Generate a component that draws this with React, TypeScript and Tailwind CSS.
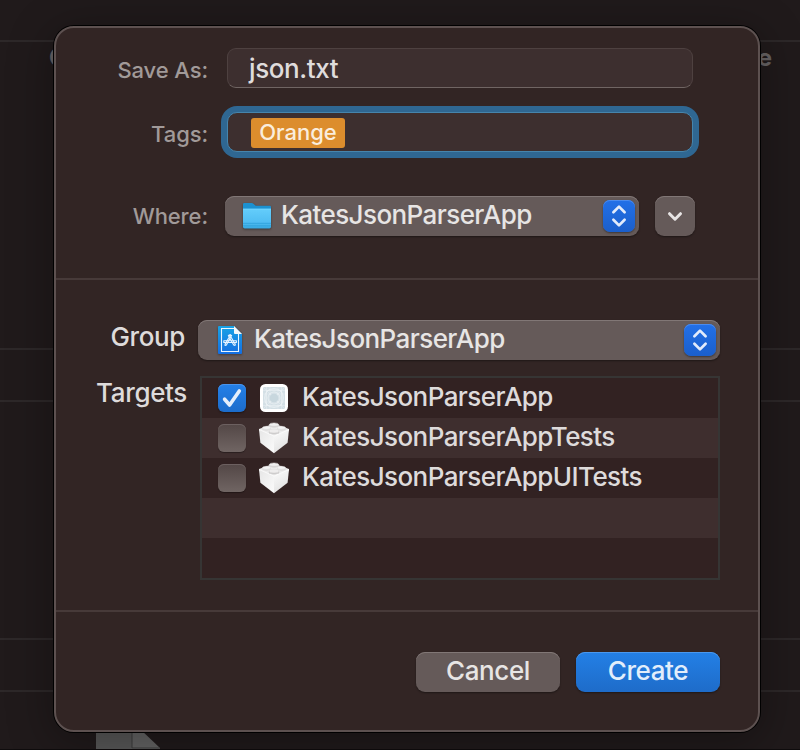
import React from "react";

function Stepper() {
  return (
    <span className="flex h-8 w-8 items-center justify-center rounded-[7px] bg-linear-to-b from-[#2270e8] to-[#1b5fcb] shadow-[inset_0_1px_0_#4b8bee,0_1px_2px_#00000066]">
      <svg width="16" height="24" viewBox="0 0 16 24" fill="none" stroke="#e2ebfb" strokeWidth="2.7" strokeLinecap="round" strokeLinejoin="round">
        <path d="M2.4 8.2 8 2.6l5.6 5.6M2.4 15.8 8 21.4l5.6-5.6" />
      </svg>
    </span>
  );
}

function FolderIcon() {
  return (
    <svg width="30" height="28" viewBox="0 0 30 28" className="block drop-shadow-[0_1px_1px_#00000066]">
      <defs>
        <linearGradient id="folderFront" x1="0" y1="0" x2="0" y2="1">
          <stop offset="0" stopColor="#64cdfb" />
          <stop offset="0.7" stopColor="#50bdf2" />
          <stop offset="1" stopColor="#37a9e2" />
        </linearGradient>
      </defs>
      <path d="M1 2.2Q1 1 2.2 1h7.4q1 0 1.8.7l1.7 1.6q.6.5 1.5.5h13.2Q29 3.800 29 5v8H1z" fill="#1c91d0" />
      <path d="M1 6.800h28v18q0 1.700-1.700 1.700H2.700Q1 26.500 1 24.800z" fill="url(#folderFront)" />
      <path d="M1 7.200h28" stroke="#75d7ff" strokeWidth="0.8" />
      <path d="M1 21.300h28M1 23.800h28" stroke="#2d9fd9" strokeWidth="0.8" />
    </svg>
  );
}

function ProjectIcon() {
  return (
    <svg width="24" height="28" viewBox="0 0 24 28" className="block drop-shadow-[0_1px_1px_#00000055]">
      <defs>
        <linearGradient id="projectPage" x1="0" y1="0" x2="0" y2="1">
          <stop offset="0" stopColor="#18a3e5" />
          <stop offset="1" stopColor="#146ee2" />
        </linearGradient>
      </defs>
      <path d="M1 0h15l8 8v19q0 1-1 1H1q-1 0-1-1V1q0-1 1-1z" fill="url(#projectPage)" />
      <path d="M16 2.500H3.500v23h17V8" fill="none" stroke="#e9f5ff" strokeWidth="1.1" />
      <path d="M16 0v7q0 1 1 1h7z" fill="#f4f7fa" />
      <g fill="none" stroke="#e6f3ff" strokeWidth="1.1" strokeLinecap="round" strokeLinejoin="round">
        <path d="m10.300 9.600 1.300-.8 5.700 9.400-.3 1.300-1.300-.5zM13.600 9.600l-1.200-.9-1 1.400M13.600 9.600 8.400 18.900l-1.300.6v-1.400l3.700-6.300" />
        <path d="M5.800 14.800h12.600v1.700H5.800z" />
      </g>
    </svg>
  );
}

function AppIcon() {
  return (
    <svg width="28" height="28" viewBox="0 0 28 28" className="block">
      <rect width="28" height="28" rx="5.500" fill="#fff" />
      <rect x="3" y="3" width="22" height="22" rx="1" fill="#d3dfe5" />
      <g fill="none" stroke="#eef4f6" strokeWidth="0.7">
        <path d="M3 6.500h22M3 10h22M3 18h22M3 21.500h22M6.500 3v22M10 3v22M18 3v22M21.500 3v22M3 3l22 22M25 3 3 25" strokeOpacity="0.6" />
        <circle cx="14" cy="14" r="9.500" />
        <circle cx="14" cy="14" r="6" />
        <rect x="6" y="6" width="16" height="16" rx="3" />
      </g>
      <circle cx="14" cy="14" r="4.300" fill="#c8d7de" />
    </svg>
  );
}

function BrickIcon() {
  return (
    <svg width="32" height="32" viewBox="0 0 32 32" className="block">
      <defs>
        <linearGradient id="brickLeft" x1="0" y1="0" x2="1" y2="1">
          <stop offset="0" stopColor="#e6e6e6" />
          <stop offset="1" stopColor="#fbfbfb" />
        </linearGradient>
        <linearGradient id="brickRight" x1="0" y1="0" x2="0.4" y2="1">
          <stop offset="0" stopColor="#fdfdfd" />
          <stop offset="1" stopColor="#e2e2e2" />
        </linearGradient>
      </defs>
      <path d="M1 7 16 1.500 31 7v2L16 15.500 1 9z" fill="#ececec" />
      <path d="M1 7.500 16 14v17.300L2.400 20.800z" fill="url(#brickLeft)" />
      <path d="M31 7.500 16 14v17.300l13.600-10.500z" fill="url(#brickRight)" />
      <path d="M1 7.500 16 14l15-6.500" fill="none" stroke="#fff" strokeWidth="0.7" />
      <g stroke="#dad8d8" strokeWidth="0.5">
        <path d="M11.500 2.500v2q4.500 2 9 0v-2z" fill="#d4d2d2" />
        <ellipse cx="16" cy="2.500" rx="4.600" ry="1.600" fill="#f0efef" />
        <path d="M4.500 6v1.500q4 2 8 0V6z" fill="#e2e2e2" />
        <ellipse cx="8.500" cy="5.800" rx="4" ry="1.500" fill="#f5f5f5" />
        <path d="M19.500 6v1.500q4 2 8 0V6z" fill="#e2e2e2" />
        <ellipse cx="23.500" cy="5.800" rx="4" ry="1.500" fill="#f5f5f5" />
        <path d="M11 9v2.200q5 2.200 10 0V9z" fill="#c8c7c7" />
        <ellipse cx="16" cy="9" rx="5" ry="1.900" fill="#eeeded" />
      </g>
    </svg>
  );
}

function Checkbox({ checked }: { checked: boolean }) {
  return checked ? (
    <span className="flex h-7 w-7 items-center justify-center rounded-[6px] bg-linear-to-b from-[#2480e8] to-[#1c6ccb] shadow-[inset_0_1px_0_#4b94ea,0_1px_2px_#00000066]">
      <svg width="28" height="28" viewBox="0 0 28 28" fill="none" stroke="#e4eefb" strokeWidth="3.600" strokeLinecap="round" strokeLinejoin="round">
        <path d="m6.600 15.200 5 5.800L21.300 7" />
      </svg>
    </span>
  ) : (
    <span className="block h-7 w-7 rounded-[6px] bg-linear-to-b from-[#534746] to-[#706563] shadow-[inset_0_1px_0_#6c6060,0_1px_1px_#00000055]" />
  );
}

const targets = [
  { name: "KatesJsonParserApp", app: true },
  { name: "KatesJsonParserAppTests", app: false },
  { name: "KatesJsonParserAppUITests", app: false },
];

function Backdrop() {
  return (
    <div className="flex h-full flex-col bg-[#201a1b]">
      <div className="h-[42px] shrink-0 border-b-2 border-[#2d2829]" />
      <div className="flex h-[308px] shrink-0 justify-between border-b-2 border-[#2d2829] pt-[2px] pr-[28px] pl-[49px] text-[24px] leading-[28px] font-bold text-[#686465]">
        <span>C</span>
        <span>e</span>
      </div>
      <div className="h-[52px] shrink-0 border-b-2 border-[#2d2829]" />
      <div className="h-[238px] shrink-0 border-b-2 border-[#2d2829]" />
      <div className="h-[52px] shrink-0 border-b-2 border-[#2d2829]" />
      <div className="flex grow items-end border-b border-[#0f0c0d] pl-24">
        <svg width="64" height="20" viewBox="0 0 64 20" className="block">
          <path d="M0 0h36v20H0z" fill="#585858" />
          <path d="M36 0h8l20 19v1H36z" fill="#646464" />
          <path d="M36 0v19h28" fill="none" stroke="#3c3c3c" strokeWidth="1" />
        </svg>
      </div>
    </div>
  );
}

export default function App() {
  return (
    <div className="relative h-[750px] w-[800px] overflow-hidden font-['Inter','Liberation_Sans',sans-serif] text-[#dedbdb]">
      <Backdrop />
      <main className="absolute top-[26px] left-[54px] flex h-[706px] w-[706px] flex-col rounded-[20px] border-2 border-[#5d5150] bg-[#322524] shadow-[0_0_0_1px_#000,0_8px_44px_4px_#0000004d]">
        <section className="flex h-[252px] shrink-0 flex-col border-b-2 border-[#473a39] pt-5 text-[22px] font-[450] text-[#a19a99]">
          <div className="flex h-10 items-center">
            <label className="w-[152px] pt-1 text-right leading-9 tracking-[-0.1px]">Save As:</label>
            <div className="ml-[19px] h-10 w-[466px] rounded-[9px] border border-[#4e4140] border-b-[#706563] bg-[#3d2f2f] pl-[21px] text-[26px] leading-[39px] tracking-[-0.4px] text-[#dfdcdc]">json.txt</div>
          </div>
          <div className="mt-6 flex h-10 items-center">
            <label className="w-[152px] pt-1 text-right leading-9 tracking-[-0.1px]">Tags:</label>
            <div className="ml-[19px] flex h-10 w-[466px] items-center rounded-[10px] border border-[#4685ac] bg-[#3d2f2f] pl-[23px] shadow-[0_0_0_6px_#2f6792]">
              <span className="mt-[2px] h-[30px] w-[94px] rounded-[3px] bg-[#dc8d2d] text-center text-[22px] leading-[28px] text-[#faeddd]">Orange</span>
            </div>
          </div>
          <div className="mt-11 flex h-10 items-center">
            <label className="w-[152px] text-right leading-[40px] tracking-[-0.1px]">Where:</label>
            <div className="ml-[17px] flex h-10 w-[414px] items-center rounded-[9px] bg-[#655a59] pr-1 pl-[17px] shadow-[inset_0_1px_0_#817776,0_1px_2px_#00000066]">
              <FolderIcon />
              <span className="ml-[9px] grow pb-[2px] text-[26px] leading-9 tracking-[-0.58px] text-[#e7e5e4]">KatesJsonParserApp</span>
              <Stepper />
            </div>
            <button className="ml-4 flex h-10 w-10 items-center justify-center rounded-[9px] bg-[#655a59] shadow-[inset_0_1px_0_#817776,0_1px_2px_#00000066]">
              <svg width="16" height="12" viewBox="0 0 16 12" fill="none" stroke="#e7e4e4" strokeWidth="3" strokeLinecap="round" strokeLinejoin="round">
                <path d="m2.500 3.700 5.500 5.500 5.500-5.500" />
              </svg>
            </button>
          </div>
        </section>

        <section className="flex h-[332px] shrink-0 flex-col border-b-2 border-[#473a39] pt-10 text-[26px] font-[450]">
          <div className="flex h-10">
            <label className="w-[129px] text-right leading-[33px] tracking-[-0.4px]">Group</label>
            <div className="ml-[13px] flex h-10 w-[522px] items-center rounded-[9px] bg-[#655a59] pr-1 pl-5 shadow-[inset_0_1px_0_#817776,0_1px_2px_#00000066]">
              <ProjectIcon />
              <span className="ml-3 grow pb-[2px] leading-9 tracking-[-0.58px] text-[#e7e5e4]">KatesJsonParserApp</span>
              <Stepper />
            </div>
          </div>
          <div className="mt-4 flex h-[204px]">
            <label className="w-[131px] text-right leading-[34px] tracking-[-0.35px]">Targets</label>
            <div className="ml-[13px] flex w-[520px] flex-col border-2 border-[#363534] bg-[#322222]">
              {targets.map((t, i) => (
                <div key={t.name} className={`flex h-10 items-center pl-4 ${i === 1 ? "bg-[#3e2e2e]" : ""}`}>
                  <Checkbox checked={t.app} />
                  <span className="ml-3 flex w-8 justify-center">{t.app ? <AppIcon /> : <BrickIcon />}</span>
                  <span className="ml-3 pb-[2px] leading-9 tracking-[-0.57px]">{t.name}</span>
                </div>
              ))}
              <div className="h-10 bg-[#3e2e2e]" />
              <div className="h-10" />
            </div>
          </div>
        </section>

        <footer className="flex justify-end gap-4 pt-10 pr-[38px] text-center text-[26px] leading-9 font-[450] tracking-[-0.4px]">
          <button className="h-10 w-36 rounded-[9px] bg-[#655a59] pb-[2px] text-[#e7e5e4] shadow-[inset_0_1px_0_#817776,0_1px_2px_#00000066]">Cancel</button>
          <button className="h-10 w-36 rounded-[9px] bg-linear-to-b from-[#2380e6] to-[#1e6cc9] pb-[2px] text-[#e2eefb] shadow-[inset_0_1px_0_#4a98ee,0_1px_2px_#00000066]">Create</button>
        </footer>
      </main>
    </div>
  );
}
